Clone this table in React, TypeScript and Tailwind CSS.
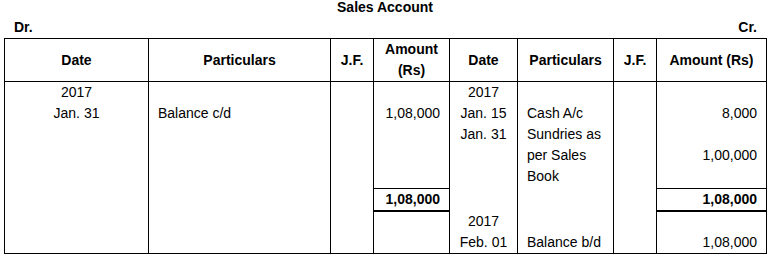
import React from "react";

const base = "border-x border-black px-[9px] leading-[21px]";
const td = `${base} align-top`;
const th = "border border-black p-0 font-bold text-center leading-[21px] align-middle";

const App = () => {
	return (
		<div className="w-[770px] h-[260px] bg-white text-[14px] text-black font-['Liberation_Sans',Arial,sans-serif]">
			<div className="h-[14px] text-center font-bold leading-[14px]">Sales Account</div>
			{/* Dr. / Cr. line */}
			<div className="flex h-[24px] justify-between pl-[14px] pr-[13px] pt-[6px] font-bold leading-[15px]">
				<span>Dr.</span>
				<span>Cr.</span>
			</div>
			<table className="ml-[4px] w-[762px] table-fixed border-collapse border border-black">
				<colgroup>
					<col className="w-[144px]" />
					<col className="w-[182px]" />
					<col className="w-[43px]" />
					<col className="w-[76px]" />
					<col className="w-[68px]" />
					<col className="w-[96px]" />
					<col className="w-[43px]" />
					<col className="w-[110px]" />
				</colgroup>
				<thead>
					<tr className="h-[43px]">
						<th className={th}>Date</th>
						<th className={th}>Particulars</th>
						<th className={th}>J.F.</th>
						<th className={th}>
							Amount
							<br />
							(Rs)
						</th>
						<th className={th}>Date</th>
						<th className={th}>Particulars</th>
						<th className={th}>J.F.</th>
						<th className={th}>Amount (Rs)</th>
					</tr>
				</thead>
				<tbody>
					<tr className="h-[21px]">
						<td className={`${td} text-center`}>2017</td>
						<td className={td}></td>
						<td className={td}></td>
						<td className={td}></td>
						<td className={`${td} text-center`}>2017</td>
						<td className={td}></td>
						<td className={td}></td>
						<td className={td}></td>
					</tr>
					<tr className="h-[21px]">
						<td className={`${td} text-center`}>Jan. 31</td>
						<td className={td}>Balance c/d</td>
						<td className={td}></td>
						<td className={`${td} text-right`}>1,08,000</td>
						<td className={`${td} text-center`}>Jan. 15</td>
						<td className={td}>Cash A/c</td>
						<td className={td}></td>
						<td className={`${td} text-right`}>8,000</td>
					</tr>
					<tr className="h-[64px]">
						<td className={td}></td>
						<td className={td}></td>
						<td className={td}></td>
						<td className={td}></td>
						<td className={`${td} text-center`}>Jan. 31</td>
						<td className={td}>Sundries as per Sales Book</td>
						<td className={td}></td>
						<td className={`${base} align-middle text-right`}>1,00,000</td>
					</tr>
					{/* totals */}
					<tr className="h-[23px]">
						<td className={td}></td>
						<td className={td}></td>
						<td className={td}></td>
						<td className={`${td} border-t border-b-2 text-right font-bold`}>1,08,000</td>
						<td className={td}></td>
						<td className={td}></td>
						<td className={td}></td>
						<td className={`${td} border-t border-b-2 text-right font-bold`}>1,08,000</td>
					</tr>
					<tr className="h-[21px]">
						<td className={td}></td>
						<td className={td}></td>
						<td className={td}></td>
						<td className={td}></td>
						<td className={`${td} text-center`}>2017</td>
						<td className={td}></td>
						<td className={td}></td>
						<td className={td}></td>
					</tr>
					<tr className="h-[21px]">
						<td className={td}></td>
						<td className={td}></td>
						<td className={td}></td>
						<td className={td}></td>
						<td className={`${td} text-center`}>Feb. 01</td>
						<td className={td}>Balance b/d</td>
						<td className={td}></td>
						<td className={`${td} text-right`}>1,08,000</td>
					</tr>
				</tbody>
			</table>
		</div>
	);
};

export default App;
